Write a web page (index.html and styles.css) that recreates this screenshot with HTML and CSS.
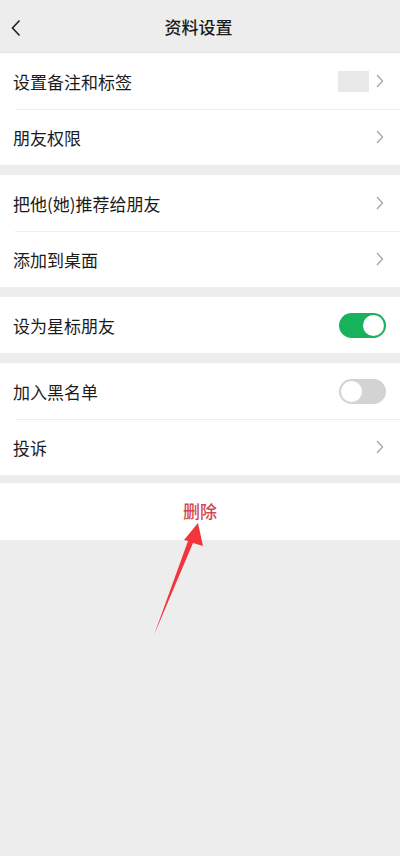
FILE: index.html
```html
<!DOCTYPE html>
<html lang="zh">
<head>
<meta charset="utf-8">
<link rel="stylesheet" href="styles.css">
</head>
<body>
<div class="page">
  <header class="nav">
    <svg class="back" width="12" height="18" viewBox="0 0 12 18"><path d="M9.5 1.5 L2.5 9 L9.5 16.5" fill="none" stroke="#222" stroke-width="1.6"/></svg>
    <div class="title">资料设置</div>
  </header>

  <section class="group first">
    <div class="row">
      <span class="label">设置备注和标签</span>
      <span class="right"><span class="tagbox"></span><svg class="chev" width="8" height="14" viewBox="0 0 8 14"><path d="M1 1 L6.5 7 L1 13" fill="none" stroke="#a8a8a8" stroke-width="1.4"/></svg></span>
    </div>
    <div class="row sep">
      <span class="label">朋友权限</span>
      <span class="right"><svg class="chev" width="8" height="14" viewBox="0 0 8 14"><path d="M1 1 L6.5 7 L1 13" fill="none" stroke="#a8a8a8" stroke-width="1.4"/></svg></span>
    </div>
  </section>

  <section class="group">
    <div class="row">
      <span class="label">把他(她)推荐给朋友</span>
      <span class="right"><svg class="chev" width="8" height="14" viewBox="0 0 8 14"><path d="M1 1 L6.5 7 L1 13" fill="none" stroke="#a8a8a8" stroke-width="1.4"/></svg></span>
    </div>
    <div class="row sep">
      <span class="label">添加到桌面</span>
      <span class="right"><svg class="chev" width="8" height="14" viewBox="0 0 8 14"><path d="M1 1 L6.5 7 L1 13" fill="none" stroke="#a8a8a8" stroke-width="1.4"/></svg></span>
    </div>
  </section>

  <section class="group">
    <div class="row">
      <span class="label">设为星标朋友</span>
      <span class="toggle on"><span class="knob"></span></span>
    </div>
  </section>

  <section class="group">
    <div class="row">
      <span class="label">加入黑名单</span>
      <span class="toggle off"><span class="knob"></span></span>
    </div>
    <div class="row sep">
      <span class="label">投诉</span>
      <span class="right"><svg class="chev" width="8" height="14" viewBox="0 0 8 14"><path d="M1 1 L6.5 7 L1 13" fill="none" stroke="#a8a8a8" stroke-width="1.4"/></svg></span>
    </div>
  </section>

  <section class="group del">
    <div class="delete">删除</div>
  </section>

  <svg class="arrow" width="400" height="856" viewBox="0 0 400 856">
    <polygon points="198,523 203,546 193,543 154,635 188,541 184,540" fill="#f2353a"/>
  </svg>
</div>
</body>
</html>
```
FILE: styles.css
```css
* { box-sizing: border-box; }
html, body {
  margin: 0;
  padding: 0;
  background: #ededed;
}
body {
  font-family: "Noto Sans CJK SC", "Noto Sans", sans-serif;
  color: #1b1b1b;
}
.page {
  position: relative;
  width: 400px;
  height: 856px;
  overflow: hidden;
  background: #ededed;
}
.nav {
  height: 53px;
  display: flex;
  align-items: center;
  justify-content: center;
  position: relative;
  border-bottom: 1px solid #e4e4e4;
}
.back {
  position: absolute;
  left: 10px;
  top: 19px;
}
.title {
  font-size: 17px;
  font-weight: 500;
  color: #1a1a1a;
  margin-left: -3px;
}
.group {
  background: #fff;
  margin-top: 10px;
}
.group.first {
  margin-top: 0;
}
.row {
  height: 56px;
  display: flex;
  align-items: center;
  justify-content: space-between;
  padding: 0 14px 0 13px;
  position: relative;
}
.row.sep::before {
  content: "";
  position: absolute;
  left: 15px;
  right: 0;
  top: 0;
  height: 1px;
  background: #ececec;
}
.label {
  font-size: 17px;
  color: #1b1b1b;
}
.right {
  display: flex;
  align-items: center;
  gap: 7px;
}
.chev {
  display: block;
  margin-right: 2px;
}
.tagbox {
  width: 31px;
  height: 21px;
  background: #e8e8e8;
}
.toggle {
  width: 47px;
  height: 25px;
  border-radius: 13px;
  position: relative;
  display: block;
}
.toggle.on {
  background: #19b25c;
}
.toggle.off {
  background: #d3d3d3;
}
.knob {
  position: absolute;
  top: 2px;
  width: 21px;
  height: 21px;
  border-radius: 50%;
  background: #fff;
}
.toggle.on .knob { right: 2px; }
.toggle.off .knob { left: 1px; top: 1px; width: 23px; height: 23px; border: 1px solid #d0d0d0; }
.group.del {
  margin-top: 8px;
  height: 57px;
  display: flex;
  align-items: center;
  justify-content: center;
}
.delete {
  font-size: 17px;
  font-weight: 500;
  color: #d3474d;
  margin-bottom: 2px;
}
.arrow {
  position: absolute;
  left: 0;
  top: 0;
  pointer-events: none;
}
```
